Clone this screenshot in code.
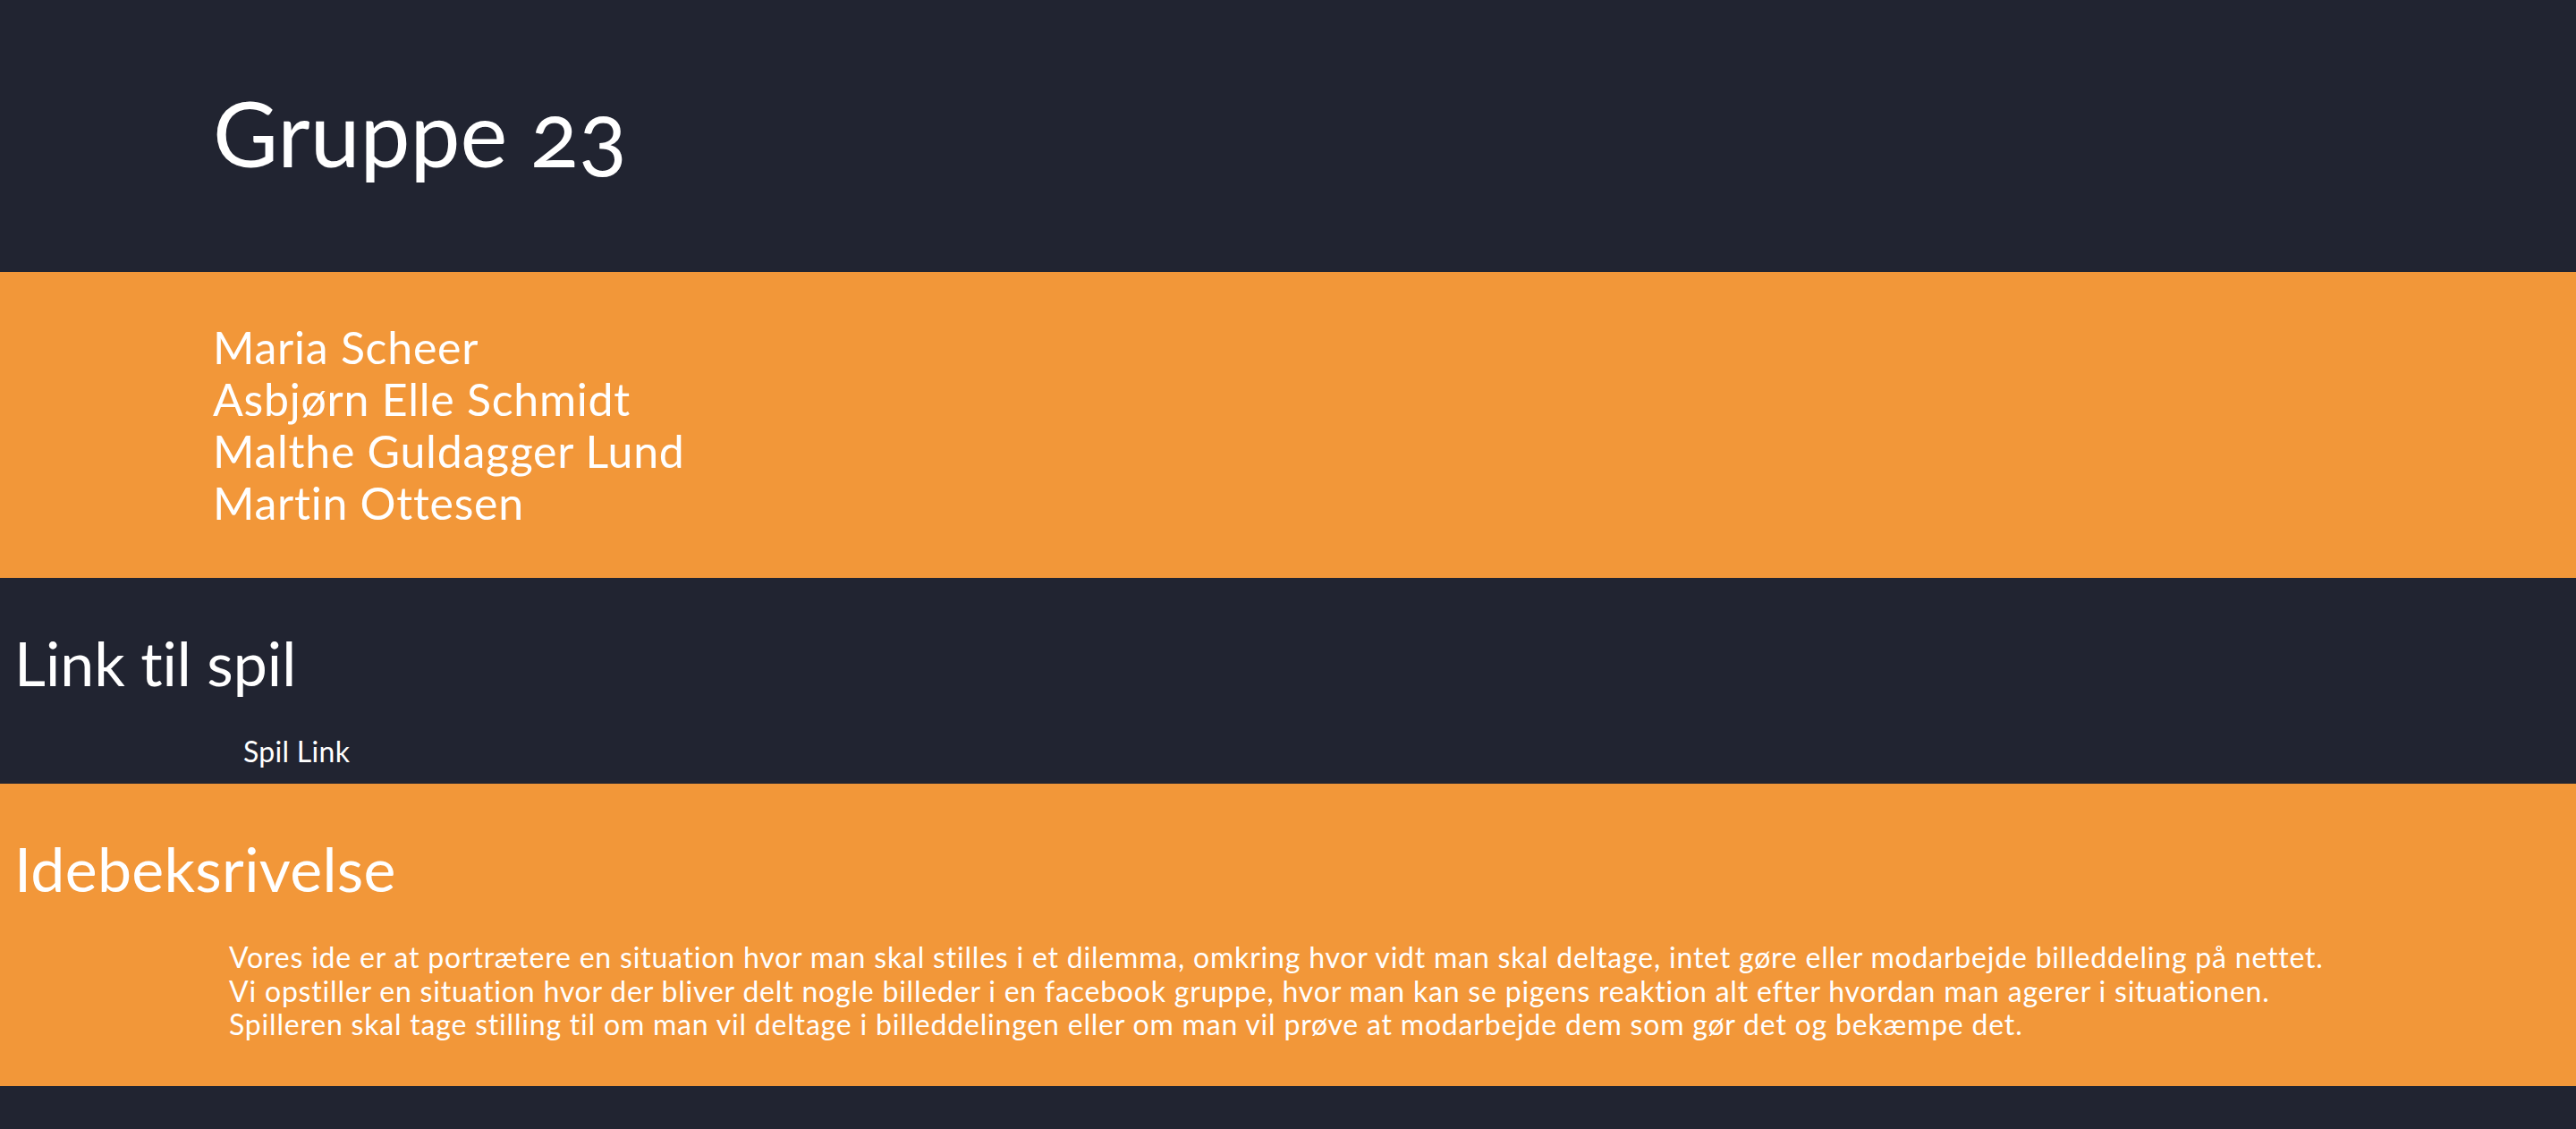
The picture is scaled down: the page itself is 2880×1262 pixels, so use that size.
const members = ['Maria Scheer', 'Asbjørn Elle Schmidt', 'Malthe Guldagger Lund', 'Martin Ottesen'];

const App = () => {
    return (
        <div className="min-h-screen bg-[#212431] text-white font-['Lato','Open_Sans',sans-serif] [font-variant-ligatures:none]">
            {/* header */}
            <header className="h-[304px] pt-[88px] pl-[238px]">
                <h1 className="text-[100px] leading-[1.2] font-normal oldstyle-nums">Gruppe 23</h1>
            </header>

            {/* gruppe medlemmer */}
            <section className="h-[342px] bg-[#f29739] pt-[55px] pl-[238px]">
                {members.map((name) => (
                    <p key={name} className="text-[50px] leading-[58px] tracking-[0.75px]">{name}</p>
                ))}
            </section>

            {/* link */}
            <section className="h-[230px] pt-[61px] pl-[16px]">
                <h2 className="text-[68px] leading-none">Link til spil</h2>
                <a href="#" className="block mt-[49px] ml-[256px] text-[32px] leading-none tracking-[0.3px]">Spil Link</a>
            </section>

            {/* beskrivelse */}
            <section className="h-[338px] bg-[#f29739] pt-[61px] pl-[16px]">
                <h2 className="text-[68px] leading-none tracking-[0.3px]">Idebeksrivelse</h2>
                <p className="mt-[46px] ml-[240px] text-[32px] leading-[37.5px] tracking-[0.8px]">
                    Vores ide er at portrætere en situation hvor man skal stilles i et dilemma, omkring hvor vidt man skal deltage, intet gøre eller modarbejde billeddeling på nettet.
                    <br />
                    Vi opstiller en situation hvor der bliver delt nogle billeder i en facebook gruppe, hvor man kan se pigens reaktion alt efter hvordan man agerer i situationen.
                    <br />
                    Spilleren skal tage stilling til om man vil deltage i billeddelingen eller om man vil prøve at modarbejde dem som gør det og bekæmpe det.
                </p>
            </section>
        </div>
    );
};

export default App;
